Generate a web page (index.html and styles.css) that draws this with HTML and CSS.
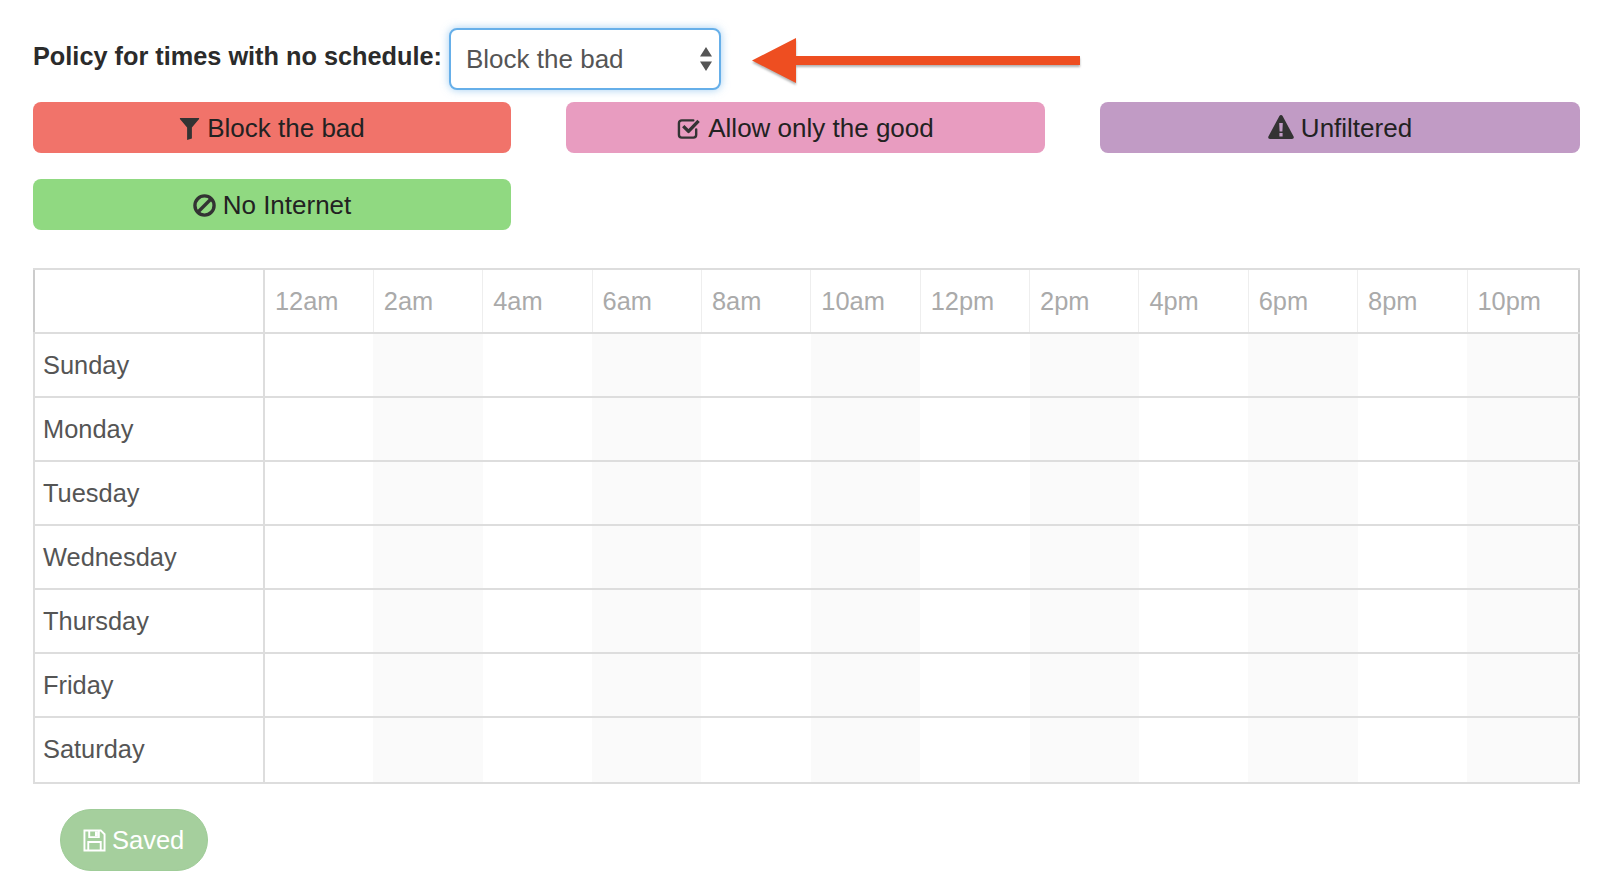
FILE: index.html
```html
<!DOCTYPE html>
<html lang="en">
<head>
<meta charset="utf-8">
<title>Schedule</title>
<link rel="stylesheet" href="styles.css">
</head>
<body>
<main class="page">
  <div class="policy">
    <label class="policy-label" for="policy">Policy for times with no schedule:</label>
    <div class="select-wrap">
      <select id="policy" class="select"><option>Block the bad</option></select>
      <svg class="select-arrows" viewBox="0 0 12 24"><path d="M6 0l6 9.500H0zM6 24l6-9.500H0z"/></svg>
    </div>
    <svg class="arrow" viewBox="0 0 328 48"><path d="M0 23.500L44 1v18h284v9H44v18z"/></svg>
  </div>
  <div class="filters">
    <button class="filter red"><svg class="ico ico-filter" viewBox="0 0 20 24"><path d="M0 1h20v1L12.500 11v11.500l-5 1.500V11L0 2z"/></svg>Block the bad</button>
    <button class="filter pink"><svg class="ico ico-check" viewBox="0 0 24 24"><path class="line" d="M19.500 13v5.500a3 3 0 0 1-3 3h-12a3 3 0 0 1-3-3v-12a3 3 0 0 1 3-3h12"/><path class="line thick" d="M6 9.500l5.500 5.500L22 4"/></svg>Allow only the good</button>
    <button class="filter purple"><svg class="ico ico-warn" viewBox="0 0 26 24"><path fill-rule="evenodd" d="M13 0c.7 0 1.300.4 1.600 1l11 20.500c.6 1.100-.2 2.500-1.600 2.500H2c-1.400 0-2.200-1.400-1.600-2.500L11.400 1c.3-.6.900-1 1.600-1zM11.200 8l.4 8.500h2.800l.4-8.500zM11.400 18v3.500h3.200V18z"/></svg>Unfiltered</button>
    <button class="filter green"><svg class="ico ico-ban" viewBox="0 0 24 24"><circle class="line thick" cx="12" cy="12" r="10"/><path class="line thick" d="M5.500 18.500l13-13"/></svg>No Internet</button>
  </div>
  <table class="schedule">
    <thead>
      <tr><th class="corner"></th><th>12am</th><th>2am</th><th>4am</th><th>6am</th><th>8am</th><th>10am</th><th>12pm</th><th>2pm</th><th>4pm</th><th>6pm</th><th>8pm</th><th>10pm</th></tr>
    </thead>
    <tbody>
      <tr><td>Sunday</td><td></td><td></td><td></td><td></td><td></td><td></td><td></td><td></td><td></td><td></td><td></td><td></td></tr>
      <tr><td>Monday</td><td></td><td></td><td></td><td></td><td></td><td></td><td></td><td></td><td></td><td></td><td></td><td></td></tr>
      <tr><td>Tuesday</td><td></td><td></td><td></td><td></td><td></td><td></td><td></td><td></td><td></td><td></td><td></td><td></td></tr>
      <tr><td>Wednesday</td><td></td><td></td><td></td><td></td><td></td><td></td><td></td><td></td><td></td><td></td><td></td><td></td></tr>
      <tr><td>Thursday</td><td></td><td></td><td></td><td></td><td></td><td></td><td></td><td></td><td></td><td></td><td></td><td></td></tr>
      <tr><td>Friday</td><td></td><td></td><td></td><td></td><td></td><td></td><td></td><td></td><td></td><td></td><td></td><td></td></tr>
      <tr class="last"><td>Saturday</td><td></td><td></td><td></td><td></td><td></td><td></td><td></td><td></td><td></td><td></td><td></td><td></td></tr>
    </tbody>
  </table>
  <button class="saved"><svg class="ico-save" viewBox="0 0 24 24"><path class="line-w" d="M1.500 1.500h17l4 4v17h-21z"/><path class="line-w" d="M6.500 1.500v7h10v-7M5.500 22.500v-9h13v9"/><path class="fill-w" d="M12.500 2.500h3v5h-3z"/></svg>Saved</button>
</main>
</body>
</html>
```
FILE: styles.css
```css
* { box-sizing: border-box; }
html, body { margin: 0; background: #fff; }
body { font-family: "Liberation Sans", Arial, sans-serif; font-size: 26px; color: #333; }
.page { width: 1600px; height: 895px; padding: 28px 20px 0 33px; overflow: hidden; }

.policy { display: flex; align-items: center; height: 62px; }
.policy-label { font-weight: 700; font-size: 25.300px; color: #2b2b2b; width: 416px; flex: none; position: relative; top: -3px; }
.select-wrap { position: relative; width: 272px; height: 62px; flex: none; }
.select {
  appearance: none; -webkit-appearance: none;
  width: 100%; height: 100%; padding: 0 40px 0 15px;
  font: inherit; color: #555; background: #fff;
  border: 2px solid #66afe9; border-radius: 8px; outline: none;
  box-shadow: 0 0 8px rgba(102,175,233,.6);
}
.select-arrows { position: absolute; right: 9px; top: 19px; width: 12px; height: 24px; fill: #555; pointer-events: none; }
.arrow { width: 328px; height: 48px; margin: 4px 0 0 31px; flex: none; fill: #ee4e21; filter: drop-shadow(0 2px 1px rgba(0,0,0,.3)); overflow: visible; }

.filters { display: grid; grid-template-columns: 478px 479px 480px; column-gap: 55px; row-gap: 26px; margin-top: 12px; }
.filter {
  display: flex; align-items: center; justify-content: center; gap: 7px;
  height: 51px; padding: 2px 0 0; border: 0; border-radius: 8px;
  font: inherit; color: #222;
}
.red { background: #f1736a; }
.pink { background: #e89cc0; }
.purple { background: #c19bc5; }
.green { background: #90d981; }
.ico { height: 23px; fill: #333; flex: none; overflow: visible; }
.ico-filter { width: 21px; }
.ico-check { width: 24px; }
.ico-warn { width: 26px; height: 24px; margin-top: -3px; }
.ico-ban { width: 23px; }
.line { fill: none; stroke: #333; stroke-width: 2.500; stroke-linecap: round; stroke-linejoin: round; }
.thick { stroke-width: 3.500; stroke-linecap: butt; }

.schedule { border-collapse: collapse; table-layout: fixed; width: 1547px; margin-top: 38px; border: 2px solid #ccc; font-size: 25.400px; }
.schedule th, .schedule td { height: 64px; border: 2px solid #ddd; padding: 0 0 0 8px; text-align: left; font-weight: 400; }
.schedule th { color: #aaa; padding-left: 10px; border-left: 1px solid #eee; border-right: 1px solid #eee; }
.schedule td { color: #555; }
.schedule th:first-child, .schedule td:first-child { width: 230px; border-right: 2px solid #ddd; }
.schedule th:nth-child(2), .schedule td:nth-child(2) { border-left: 2px solid #ddd; }
.schedule th:last-child { width: 112px; }
.schedule td:nth-child(n+2) { border-left: 0; border-right: 0; }
.schedule td:nth-child(2n+3) { background: #fafafa; }
.schedule .last td { height: 66px; padding-bottom: 2px; }

.saved {
  display: flex; align-items: center; gap: 6px;
  width: 148px; height: 62px; margin: 25px 0 0 27px; padding: 0 0 0 22px;
  border: 1px solid #9fcc98; border-radius: 31px; background: #a5cf9d;
  font: inherit; font-size: 25.500px; color: #fff;
}
.ico-save { width: 23px; height: 23px; flex: none; }
.line-w { fill: none; stroke: #fff; stroke-width: 2; }
.fill-w { fill: #fff; }
```
